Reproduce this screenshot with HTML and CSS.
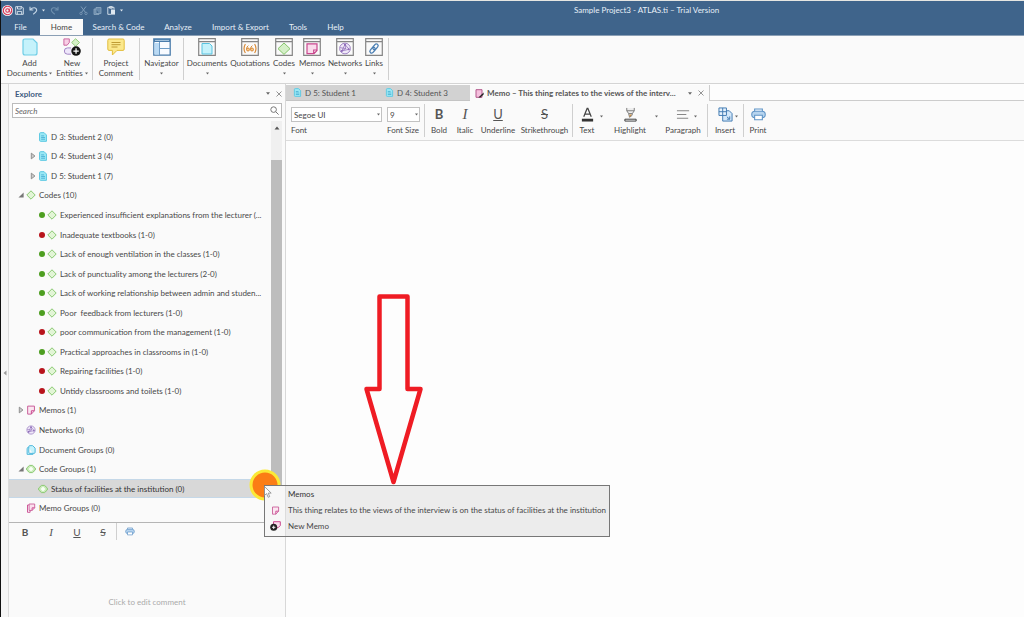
FILE: index.html
```html
<!DOCTYPE html>
<html lang="en">
<head>
<meta charset="utf-8">
<title>Sample Project3 - ATLAS.ti – Trial Version</title>
<link rel="stylesheet" href="styles.css">
</head>
<body>
<svg class="defs" aria-hidden="true">
  <symbol id="doc" viewBox="0 0 16 18"><path d="M1 3Q1 1 3 1H11L15 5V15Q15 17 13 17H3Q1 17 1 15Z" fill="#c5f2fb" stroke="#6fcde6" stroke-width="1.2"/></symbol>
  <symbol id="docs" viewBox="0 0 8 9"><path d="M.9 1.5Q.9.6 1.8.6H5L7.1 2.7V8.4H1.8Q.9 8.4.9 7.5Z" fill="#9be8f5" stroke="#5cc8e2" stroke-width=".9"/><path d="M2.3 3.5H5M2.3 5H5.8M2.3 6.5H5.8" stroke="#3ca8cf" stroke-width=".7"/></symbol>
  <symbol id="docgroup" viewBox="0 0 9 9"><path d="M2.5 1.5Q2.5.6 3.4.6H6L8.2 2.8V6.6Q8.2 7.5 7.3 7.5H3.4Q2.5 7.5 2.5 6.6ZM2.4 2Q1 2 1 3.4V8.4H6.5" fill="#c5f2fb" stroke="#4fb8dc" stroke-width=".9"/></symbol>
  <symbol id="code" viewBox="0 0 10 10"><path d="M5 .8L9.2 5L5 9.2L.8 5Z" fill="#e2f5d6" stroke="#8bc973"/></symbol>
  <symbol id="codegroup" viewBox="0 0 10 10"><path d="M3.5 1.4H6.5L9.3 4V6L6.5 8.6H3.5L.7 6V4Z" fill="#c9ebb8" stroke="#8bc973"/><path d="M5 2.6L7.4 5L5 7.4L2.6 5Z" fill="#f8fff5"/></symbol>
  <symbol id="memo" viewBox="0 0 9 9"><path d="M1.5 1H7.6V5.2L4.8 8.2H3.6L1.5 8.2Z" fill="#fbe6f1" stroke="#c9609a" stroke-width=".9"/><path d="M7.6 5.2H4.8V8.2" fill="none" stroke="#c9488e" stroke-width=".9"/></symbol>
  <symbol id="memogroup" viewBox="0 0 9 10"><path d="M2.6 1H8.2V4.8L5.6 7.4H2.6Z" fill="#fbe0ee" stroke="#c9609a" stroke-width=".9"/><path d="M8.2 4.8H5.6V7.3M2.4 2H1V9.3H3.6V7.4" fill="none" stroke="#c9488e" stroke-width=".9"/></symbol>
  <symbol id="network" viewBox="0 0 16 16"><circle cx="8" cy="8" r="6.6" fill="#efe8f8" stroke="#9c80c2" stroke-width="1.2"/><path d="M8 3L4 11L13 9ZM8 3L9 8L4 11M2 7L9 8" fill="none" stroke="#8d6bb8" stroke-width=".9"/><g fill="#8d6bb8"><circle cx="8" cy="3.4" r="1.3"/><circle cx="4" cy="11" r="1.3"/><circle cx="12.6" cy="9" r="1.3"/></g></symbol>
  <symbol id="window" viewBox="0 0 18 18"><path d="M.7.7H17.3V17.3H.7ZM.7 3.6H17.3" fill="#fafafa" stroke="#858585" stroke-width="1.2"/></symbol>
  <symbol id="printer" viewBox="0 0 14 13"><path d="M3.4 4V1.4H10.6V4" fill="#eef6ff" stroke="#5f94c6"/><rect x=".7" y="3.4" width="12.6" height="6.2" rx="3" fill="#b6d4ef" stroke="#5f94c6"/><path d="M3.4 7.2H10.6V11.4H3.4Z" fill="#fff" stroke="#5f94c6"/></symbol>
  <symbol id="caret" viewBox="0 0 4 3"><path d="M0 .3H4L2 2.7Z" fill="#666"/></symbol>
  <symbol id="close" viewBox="0 0 6 6"><path d="M.5.5L5.5 5.5M5.5.5L.5 5.5" stroke="#888" stroke-width=".9"/></symbol>
  <symbol id="closed" viewBox="0 0 5 7"><path d="M1 1V6L4.2 3.5Z" fill="#ccc" stroke="#888" stroke-width=".8"/></symbol>
  <symbol id="opened" viewBox="0 0 5 5"><path d="M4.7.4V4.6H.4Z" fill="#777"/></symbol>
</svg>

<div class="app">
  <header class="top">
    <div class="titlebar">
      <svg class="logo" viewBox="0 0 12 12"><circle cx="6" cy="6" r="6" fill="#f3f1f4"/><circle cx="6" cy="6" r="4.6" fill="none" stroke="#d9304e" stroke-width="1.2"/><circle cx="6" cy="6" r="1.9" fill="none" stroke="#d9304e" stroke-width="1.1"/><path d="M8 4V7.4Q9 8.6 10.3 7" fill="none" stroke="#d9304e"/></svg>
      <nav class="quick">
        <button aria-label="Save"><svg class="s9" viewBox="0 0 9 9"><path d="M.7.7H7L8.3 2V8.3H.7ZM2.5.7V3H6.2V.7M2.3 8.3V5.4H6.7V8.3" fill="none" stroke="#dfe8f0" stroke-width=".9"/></svg></button>
        <button class="undo" aria-label="Undo"><svg class="s9" viewBox="0 0 9 9"><path d="M1 .8V4H4.3M1.2 3.8Q3 1.5 5.5 1.8Q8 2.4 7.6 4.8Q7 6.5 4.2 8.2" fill="none" stroke="#c5d6e6" stroke-width="1.1"/></svg></button>
        <svg class="caret light" viewBox="0 0 4 3"><path d="M0 .3H4L2 2.7Z" fill="#dfe8f0"/></svg>
        <button class="redo" aria-label="Redo"><svg class="s9" viewBox="0 0 9 9"><path d="M8 .8V4H4.7M7.8 3.8Q6 1.5 3.5 1.8Q1 2.4 1.4 4.8Q2 6.5 4.8 8.2" fill="none" stroke="#6e8fae" stroke-width="1.1"/></svg></button>
        <button class="cut" aria-label="Cut"><svg class="s9" viewBox="0 0 9 9"><path d="M2 .5L6.5 6.5M7 .5L2.5 6.5" stroke="#7f9cb9" fill="none"/><circle cx="2" cy="7.4" r="1.2" fill="none" stroke="#7f9cb9" stroke-width=".8"/><circle cx="7" cy="7.4" r="1.2" fill="none" stroke="#7f9cb9" stroke-width=".8"/></svg></button>
        <button class="copy" aria-label="Copy"><svg class="s9" viewBox="0 0 9 9"><path d="M3 1.5H8V7.5H3ZM3 3H1V8.5H6V7.5" fill="#6889aa" stroke="#8fa9c2" stroke-width=".8"/></svg></button>
        <button class="paste" aria-label="Paste"><svg class="s9" viewBox="0 0 9 9"><path d="M4 8.3H.8V1.3H7V3M2.5.6H5.3V2.2H2.5Z" fill="none" stroke="#dfe8f0" stroke-width=".9"/><path d="M4 3.5H8V8.6H4Z" fill="#dfe8f0"/></svg></button>
        <svg class="caret light" viewBox="0 0 4 3"><path d="M0 .3H4L2 2.7Z" fill="#dfe8f0"/></svg>
      </nav>
      <h1 class="title">Sample Project3 - ATLAS.ti – Trial Version</h1>
    </div>
    <nav class="menu">
      <button class="m-file">File</button><button class="m-home active">Home</button><button class="m-search">Search &amp; Code</button><button class="m-analyze">Analyze</button><button class="m-import">Import &amp; Export</button><button class="m-tools">Tools</button><button class="m-help">Help</button>
    </nav>
  </header>

  <section class="ribbon" aria-label="Home">
    <button class="rb w49"><svg class="i18"><use href="#doc"/></svg><span>Add<br>Documents <svg class="caret"><use href="#caret"/></svg></span></button>
    <button class="rb w36"><svg class="i18" viewBox="0 0 20 20"><path d="M1 1H7V5L4.6 8H1Z" fill="#f8cfe5" stroke="#c65b99"/><path d="M14 .8L18.4 5L14 9.2L9.6 5Z" fill="#d5f0c8" stroke="#8bc973"/><path d="M9 11H5Q1.5 11 1.5 14.5Q1.5 18 5 18H9" fill="#eee6fa" stroke="#9a7cc0"/><circle cx="14.5" cy="14.5" r="5.3" fill="#161616"/><path d="M14.5 11.5V17.5M11.5 14.5H17.5" stroke="#fff" stroke-width="1.4"/></svg><span>New<br>Entities <svg class="caret"><use href="#caret"/></svg></span></button>
    <i class="sep"></i>
    <button class="rb w42"><svg class="i18" viewBox="0 0 18 18"><path d="M2 1H16Q17.2 1 17.2 2.4V11Q17.2 12.4 16 12.4H10L5.4 17V12.4H2Q.8 12.4.8 11V2.4Q.8 1 2 1Z" fill="#fbe88c" stroke="#e2bd3c"/><path d="M4.5 4.5H13.5M4.5 6.7H13.5M4.5 9H10.5" stroke="#b8932a" stroke-width=".9"/></svg><span>Project<br>Comment</span></button>
    <i class="sep"></i>
    <button class="rb w39"><svg class="i18" viewBox="0 0 18 18"><path d="M.8.8H17.2V17.2H.8Z" fill="#f8fbff" stroke="#4a7cab" stroke-width="1.3"/><path d="M1 1H17V4H1Z" fill="#4a7cab"/><path d="M1.5 5H6V16.5H1.5Z" fill="#b9daf5"/><path d="M6.5 4V17M6.5 10.5H17" stroke="#6e9cc6"/><path d="M2 2.4H16" stroke="#c8def0" stroke-width=".8"/></svg><span>Navigator</span><svg class="caret below"><use href="#caret"/></svg></button>
    <i class="sep"></i>
    <button class="rb w42"><svg class="i18" viewBox="0 0 18 18"><use href="#window"/><path d="M4 5.5H11.5L14 8V16H4Z" fill="#c5f2fb" stroke="#58c3e0"/></svg><span>Documents</span><svg class="caret below"><use href="#caret"/></svg></button>
    <button class="rb w44"><svg class="i18" viewBox="0 0 18 18"><use href="#window"/><path d="M4.4 6Q1.6 10.5 4.4 15M13.6 6Q16.4 10.5 13.6 15" fill="none" stroke="#d98c3a" stroke-width="1.2"/><g fill="#f6c890" stroke="#d98c3a"><circle cx="7" cy="11.5" r="1.5"/><circle cx="11" cy="11.5" r="1.5"/></g><path d="M5.5 11.5Q5.5 8.5 7.4 7.6M9.5 11.5Q9.5 8.5 11.4 7.6" fill="none" stroke="#d98c3a"/></svg><span>Quotations</span></button>
    <button class="rb w24"><svg class="i18" viewBox="0 0 18 18"><use href="#window"/><path d="M9 5L15 10.7L9 16.4L3 10.7Z" fill="#d5f0c8" stroke="#86c56c"/></svg><span>Codes</span><svg class="caret below"><use href="#caret"/></svg></button>
    <button class="rb w32"><svg class="i18" viewBox="0 0 18 18"><use href="#window"/><path d="M4 5.8H14V12.5L11 15.6H4ZM14 12H10.7V15.6" fill="#fadcec" stroke="#c9488e" stroke-width="1.2"/></svg><span>Memos</span><svg class="caret below"><use href="#caret"/></svg></button>
    <button class="rb w34"><svg class="i18" viewBox="0 0 18 18"><use href="#window"/><use href="#network" x="2.5" y="4" width="13" height="13"/></svg><span>Networks</span><svg class="caret below"><use href="#caret"/></svg></button>
    <button class="rb w24"><svg class="i18" viewBox="0 0 18 18"><use href="#window"/><g fill="none" stroke="#4b7fb3" stroke-width="1.3" transform="rotate(-50 9 10.5)"><rect x="3.6" y="8.7" width="6.4" height="3.6" rx="1.8"/><rect x="8" y="8.7" width="6.4" height="3.6" rx="1.8"/></g></svg><span>Links</span><svg class="caret below"><use href="#caret"/></svg></button>
    <i class="sep"></i>
  </section>

  <main class="work">
    <div class="gutter"><svg viewBox="0 0 4 6"><path d="M3.5.5V5.5L.5 3Z" fill="#999"/></svg></div>
    <aside class="explore">
      <div class="panelhead"><h2>Explore</h2><button aria-label="Panel options"><svg class="caret"><use href="#caret"/></svg></button><button aria-label="Close panel"><svg class="x"><use href="#close"/></svg></button></div>
      <div class="search"><input type="text" placeholder="Search" aria-label="Search"><svg viewBox="0 0 9 9"><circle cx="3.6" cy="3.6" r="2.8" fill="none" stroke="#777"/><path d="M5.7 5.7L8.6 8.6" stroke="#777"/></svg></div>
      <div class="treewrap">
        <ul class="tree">
          <li class="l2"><i></i><svg><use href="#docs"/></svg><span>D 3: Student 2 (0)</span></li>
          <li class="l2"><i><svg><use href="#closed"/></svg></i><svg><use href="#docs"/></svg><span>D 4: Student 3 (4)</span></li>
          <li class="l2"><i><svg><use href="#closed"/></svg></i><svg><use href="#docs"/></svg><span>D 5: Student 1 (7)</span></li>
          <li><i><svg><use href="#opened"/></svg></i><svg><use href="#code"/></svg><span>Codes (10)</span></li>
          <li class="l3"><b class="green"></b><svg><use href="#code"/></svg><span>Experienced insufficient explanations from the lecturer (...</span></li>
          <li class="l3"><b class="red"></b><svg><use href="#code"/></svg><span>Inadequate textbooks (1-0)</span></li>
          <li class="l3"><b class="green"></b><svg><use href="#code"/></svg><span>Lack of enough ventilation in the classes (1-0)</span></li>
          <li class="l3"><b class="green"></b><svg><use href="#code"/></svg><span>Lack of punctuality among the lecturers (2-0)</span></li>
          <li class="l3"><b class="green"></b><svg><use href="#code"/></svg><span>Lack of working relationship between admin and studen...</span></li>
          <li class="l3"><b class="green"></b><svg><use href="#code"/></svg><span>Poor&nbsp; feedback from lecturers (1-0)</span></li>
          <li class="l3"><b class="red"></b><svg><use href="#code"/></svg><span>poor communication from the management (1-0)</span></li>
          <li class="l3"><b class="green"></b><svg><use href="#code"/></svg><span>Practical approaches in classrooms in (1-0)</span></li>
          <li class="l3"><b class="red"></b><svg><use href="#code"/></svg><span>Repairing facilities (1-0)</span></li>
          <li class="l3"><b class="red"></b><svg><use href="#code"/></svg><span>Untidy classrooms and toilets (1-0)</span></li>
          <li><i><svg><use href="#closed"/></svg></i><svg><use href="#memo"/></svg><span>Memos (1)</span></li>
          <li><i></i><svg><use href="#network"/></svg><span>Networks (0)</span></li>
          <li><i></i><svg><use href="#docgroup"/></svg><span>Document Groups (0)</span></li>
          <li><i><svg><use href="#opened"/></svg></i><svg><use href="#codegroup"/></svg><span>Code Groups (1)</span></li>
          <li class="l2 selected"><i></i><svg><use href="#codegroup"/></svg><span>Status of facilities at the institution (0)</span></li>
          <li><i></i><svg><use href="#memogroup"/></svg><span>Memo Groups (0)</span></li>
        </ul>
        <div class="scroll"><svg viewBox="0 0 6 4"><path d="M3 .5L5.5 3.5H.5Z" fill="#555"/></svg><div class="thumb"></div></div>
      </div>
      <section class="comment">
        <div class="formatbar"><button aria-label="Bold"><b>B</b></button><button aria-label="Italic"><em class="serif">I</em></button><button aria-label="Underline"><u>U</u></button><button aria-label="Strikethrough"><s>S</s></button><i class="sep"></i><button aria-label="Print"><svg class="print"><use href="#printer"/></svg></button></div>
        <p>Click to edit comment</p>
      </section>
    </aside>

    <section class="editor">
      <div class="tabs">
        <button class="tab"><svg><use href="#docs"/></svg>D 5: Student 1</button>
        <button class="tab"><svg><use href="#docs"/></svg>D 4: Student 3</button>
        <div class="tab current"><svg viewBox="0 0 9 9"><path d="M1 .7H7V8.3H1Z" fill="#f5bfdd" stroke="#b3588c"/><path d="M3.4 8.6L8.6 3.4V5.4L5.4 8.6Z" fill="#222"/></svg><span>Memo – This thing relates to the views of the interv...</span><button aria-label="Tab options"><svg class="caret"><use href="#caret"/></svg></button><button aria-label="Close tab"><svg class="x"><use href="#close"/></svg></button></div>
        <div class="rest"></div>
      </div>
      <div class="toolbar">
        <div class="field font"><div class="pick"><select id="font"><option>Segoe UI</option></select><svg class="caret"><use href="#caret"/></svg></div><label for="font">Font</label></div>
        <div class="field size"><div class="pick"><select id="size"><option>9</option></select><svg class="caret"><use href="#caret"/></svg></div><label for="size">Font Size</label></div>
        <i class="sep"></i>
        <button class="tb w26"><span class="g"><b>B</b></span>Bold</button>
        <button class="tb w26"><span class="g serif"><em>I</em></span>Italic</button>
        <button class="tb w40"><span class="g"><u>U</u></span>Underline</button>
        <button class="tb w53"><span class="g"><s>S</s></span>Strikethrough</button>
        <i class="sep"></i>
        <button class="tb w26"><svg class="g" viewBox="0 0 16 16"><path d="M4 10.5L7.6 1.5H8.4L12 10.5M5.2 7.5H10.8" fill="none" stroke="#444" stroke-width="1.3"/><path d="M2 12.5H14V15.5H2Z" fill="#333"/></svg>Text</button>
        <svg class="caret"><use href="#caret"/></svg>
        <button class="tb high"><svg class="g" viewBox="0 0 16 16"><path d="M4 1V4L6 7H10L12 4V1M4 4H12M6 7L7 11L9.6 9L10 7" fill="#eee" stroke="#777"/><path d="M7 8H9.6L7 11Z" fill="#c98b3a"/><path d="M2 13H14V15H2Z" fill="#fff" stroke="#333"/></svg>Highlight</button>
        <svg class="caret"><use href="#caret"/></svg>
        <button class="tb para"><svg class="g" viewBox="0 0 16 16"><path d="M1 4H14M1 8H11M1 12H13" stroke="#888" stroke-width="1.2"/></svg>Paragraph</button>
        <svg class="caret"><use href="#caret"/></svg>
        <i class="sep"></i>
        <button class="tb ins"><svg class="g" viewBox="0 0 16 16"><path d="M5 4H12L15 7V15H5Z" fill="#d4e8fa" stroke="#3e78b0"/><path d="M1 1H9V9H1ZM5 1V9M1 5H9" fill="#e6f2fd" stroke="#3e78b0"/><path d="M9.5 10.5L12.5 13M12.5 10V13H9.5" stroke="#3e78b0" fill="none"/></svg>Insert</button>
        <svg class="caret"><use href="#caret"/></svg>
        <i class="sep"></i>
        <button class="tb w26"><svg class="g"><use href="#printer"/></svg>Print</button>
      </div>
      <div class="page"></div>
    </section>
  </main>

  <svg class="arrow" viewBox="0 0 60 192"><path d="M16.5 3.5H44.5V96H57.5L30.5 189L3.5 96H16.5Z" fill="none" stroke="#ef1c24" stroke-width="4.5" stroke-linejoin="round"/></svg>
  <svg class="spot" viewBox="0 0 32 32"><circle cx="16" cy="16" r="14" fill="#fb7d15" stroke="#fbe936" stroke-width="3"/></svg>
  <div class="context" role="menu">
    <div class="heading"><i></i><span>Memos</span></div>
    <button role="menuitem"><i><svg><use href="#memo"/></svg></i><span>This thing relates to the views of the interview is on the status of facilities at the institution</span></button>
    <button role="menuitem"><i><svg class="new" viewBox="0 0 11 10"><path d="M3.5.7H10.3V4.5L8 6.8H3.5Z" fill="#fadcec" stroke="#c9488e"/><circle cx="3.7" cy="6.3" r="3.5" fill="#222"/><path d="M3.7 4.6V8M2 6.3H5.4" stroke="#fff" stroke-width=".9"/></svg></i><span>New Memo</span></button>
  </div>
  <svg class="pointer" viewBox="0 0 8 12"><path d="M.5.6V9.4L2.6 7.6L4.2 11.3L5.7 10.6L4.2 7.1H7.2Z" fill="#fff" stroke="#888" stroke-width=".8"/></svg>
</div>
</body>
</html>
```
FILE: styles.css
```css
* { box-sizing: border-box; }
html, body { height: 100%; margin: 0; }
body { background: #fdfdfd; color: #484848; font: 8px/10px Lato, "Open Sans", sans-serif; overflow: hidden; }
button, input, select { font: inherit; color: inherit; background: none; border: 0; padding: 0; margin: 0; }
svg { display: block; flex: none; }
h1, h2, p, ul { margin: 0; padding: 0; font: inherit; list-style: none; }
.defs { position: absolute; width: 0; height: 0; }
.app { position: relative; height: 100vh; display: flex; flex-direction: column; border-left: 1px solid #111; border-top: 1px solid #e6e6e2; }
.caret { width: 4px; height: 3px; }
.x { width: 6px; height: 6px; }
.sep { flex: none; width: 1px; background: #cfcfcf; }

.top { background: #3f648b; color: #e8f0f8; border-bottom: 1px solid #8b9fb5; }
.titlebar { display: flex; align-items: center; height: 18px; padding-left: 1px; }
.logo { width: 11px; height: 11px; }
.quick { display: flex; align-items: center; flex: 1; padding-left: 2px; }
.quick .s9 { width: 9px; height: 9px; }
.undo { margin-left: 5px; }
.caret.light { margin-left: 4px; width: 3px; }
.redo { margin-left: 5px; }
.cut { margin-left: 20px; }
.copy { margin-left: 5px; }
.paste { margin-left: 5px; }
.title { width: 450px; }
.menu { display: flex; height: 16px; }
.menu button { text-align: center; white-space: nowrap; }
.menu .active { background: #fafafa; color: #444; }
.m-file { width: 39px; }
.m-home { width: 43px; }
.m-search { width: 71px; }
.m-analyze { width: 48px; }
.m-import { width: 77px; }
.m-tools { width: 38px; }
.m-help { width: 37px; }

.ribbon { display: flex; height: 48px; padding: 2px 0 3px 4px; background: #fafafa; border-bottom: 1px solid #d4d4d4; }
.ribbon .sep { margin: 0 2px; }
.rb { display: flex; flex-direction: column; align-items: center; text-align: center; white-space: nowrap; }
.rb span { margin-top: 2px; }
.rb span .caret { display: inline-block; vertical-align: 1px; width: 3px; }
.rb .below { margin-top: 4px; width: 3px; }
.i18 { width: 18px; height: 18px; }
.w24 { width: 24px; }
.w26 { width: 26px; }
.w32 { width: 32px; }
.w34 { width: 34px; }
.w36 { width: 36px; }
.w39 { width: 39px; }
.w40 { width: 40px; }
.w42 { width: 42px; }
.w44 { width: 44px; }
.w49 { width: 49px; }
.w53 { width: 53px; }

.work { display: flex; flex: 1; min-height: 0; }
.gutter { width: 8px; background: #f6f6f6; border-right: 1px solid #dcdcdc; display: flex; align-items: center; justify-content: center; padding-top: 45px; }
.gutter svg { width: 4px; height: 6px; }
.explore { width: 277px; display: flex; flex-direction: column; background: #fafafa; border-right: 1px solid #d8d8d8; }
.panelhead { display: flex; align-items: center; gap: 6px; height: 19px; padding: 0 3px 0 6px; }
.panelhead h2 { flex: 1; font-weight: 700; color: #3d5a80; }
.search { display: flex; align-items: center; height: 15px; margin: 0 3px; padding: 0 2px; background: #fff; border: 1px solid #bbb; }
.search input { flex: 1; min-width: 0; font-style: italic; outline: 0; }
.search input::placeholder { color: #666; opacity: 1; }
.search svg { width: 9px; height: 9px; }
.treewrap { flex: 1; display: flex; min-height: 0; padding-top: 3px; }
.tree { flex: 1; min-width: 0; display: flex; flex-direction: column; padding: 6px 0 4px; }
.tree li { flex: 1; display: flex; align-items: center; padding-left: 9px; white-space: nowrap; border: 1px solid transparent; border-width: 1px 0; }
.tree li > i { flex: none; width: 6px; display: flex; justify-content: center; margin-right: 2px; }
.tree li > i svg { width: 6px; height: 8px; }
.tree li > svg { width: 10px; height: 10px; margin-right: 3px; }
.tree .l2 { padding-left: 21px; }
.tree .l3 { padding-left: 30px; }
.tree li > b { flex: none; width: 6px; height: 6px; border-radius: 50%; margin-right: 2px; }
.green { background: #4d9e20; }
.red { background: #b8141c; }
.tree .selected { background: #d8d8d8; border-color: #c5d8e8; color: #333; }
.scroll { width: 11px; margin-right: 3px; background: #f0f0f0; display: flex; flex-direction: column; align-items: center; padding-top: 5px; }
.scroll svg { width: 6px; height: 4px; }
.thumb { margin-top: 30px; width: 100%; flex: 1; max-height: 336px; background: #bdbdbd; }
.comment { height: 95px; border-top: 1px solid #b5b5b5; display: flex; flex-direction: column; }
.formatbar { display: flex; height: 17px; padding-left: 3px; font-size: 10px; color: #555; }
.formatbar button { width: 26px; display: flex; align-items: center; justify-content: center; }
.formatbar .serif { font-size: 11px; }
.print { width: 10px; height: 9px; }
.comment p { margin: auto 0 10px; text-align: center; color: #aaa; }

.editor { flex: 1; min-width: 0; display: flex; flex-direction: column; background: #fdfdfd; }
.tabs { display: flex; height: 17px; padding-top: 1px; color: #555; }
.tab { display: flex; align-items: center; width: 92px; padding-left: 7px; gap: 3px; background: #d2d2d2; border-bottom: 1px solid #c4c4c4; white-space: nowrap; }
.tab > svg { width: 9px; height: 9px; }
.current { width: 240px; padding: 0 5px; background: #fafafa; border: 0; border-right: 1px solid #ccc; font-weight: 700; }
.current span { flex: 1; min-width: 0; overflow: hidden; }
.current .x { margin-left: 3px; }
.rest { flex: 1; border-bottom: 1px solid #ccc; }
.toolbar { display: flex; height: 40px; padding: 3px 0 3px 5px; background: #fafafa; border-bottom: 1px solid #dcdcdc; }
.toolbar .sep { margin: 0 1px; }
.field { display: flex; flex-direction: column; padding-top: 3px; margin-right: 5px; }
.field label { margin-top: 3px; white-space: nowrap; }
.font { width: 91px; }
.size { width: 33px; margin-right: 3px; }
.pick { position: relative; height: 15px; }
.pick select { width: 100%; height: 100%; padding-left: 2px; appearance: none; background: #fff; border: 1px solid #c2c2c2; border-radius: 0; }
.pick .caret { position: absolute; right: 2px; top: 6px; width: 3px; }
.tb { display: flex; flex-direction: column; align-items: center; white-space: nowrap; padding-top: 3px; }
.g { display: block; width: 15px; height: 15px; margin-bottom: 3px; font-size: 13px; line-height: 15px; color: #555; text-align: center; }
.serif { font-family: "Liberation Serif", serif; font-size: 15px; }
.toolbar > .caret { width: 3px; margin-top: 11px; }
.high { width: 52px; padding-left: 2px; }
.para { width: 50px; }
.toolbar > .para + .caret { margin: 11px 9px 0 -14px; }
.ins { width: 32px; }
.toolbar > .ins + .caret { margin: 11px 4px 0 -6px; }
.page { flex: 1; background: #fdfdfd; }

.arrow { position: absolute; left: 362px; top: 292px; width: 60px; height: 192px; }
.spot { position: absolute; left: 248px; top: 468px; width: 32px; height: 32px; }
.pointer { position: absolute; left: 263px; top: 485px; width: 8px; height: 12px; }
.context { position: absolute; left: 263px; top: 484px; width: 346px; padding-bottom: 2px; border: 1px solid #777; background: linear-gradient(90deg, #f7f7f7 20px, #dcdcdc 20px, #dcdcdc 21px, #ececec 21px); }
.context > * { display: flex; align-items: center; width: 100%; height: 16px; text-align: left; white-space: nowrap; }
.context .heading { color: #333; }
.context i { flex: none; width: 23px; display: flex; justify-content: center; padding-right: 3px; }
.context svg { width: 9px; height: 9px; }
.context .new { width: 11px; height: 10px; }
```
